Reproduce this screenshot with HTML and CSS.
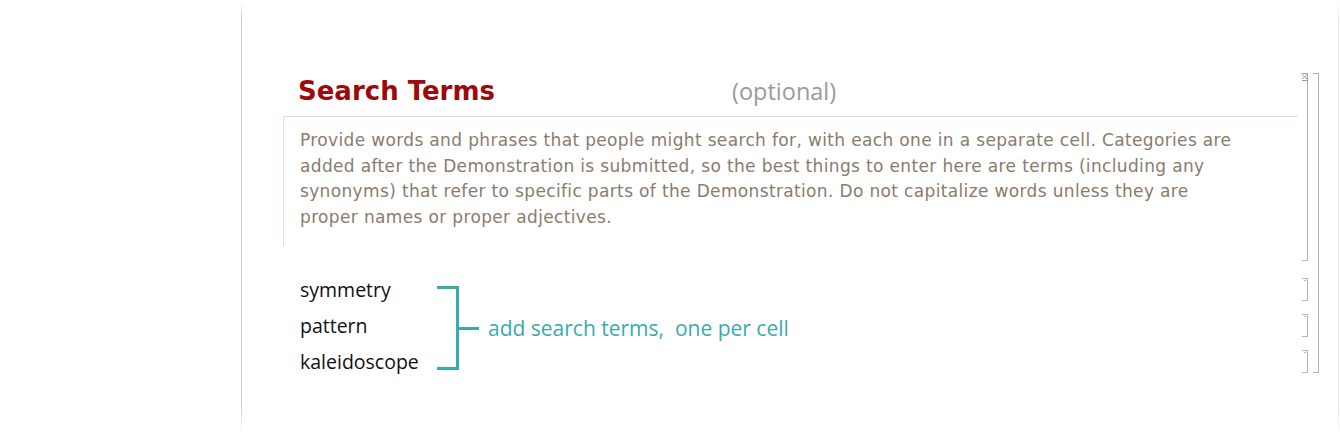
FILE: index.html
```html
<!DOCTYPE html>
<html lang="en">
<head>
<meta charset="utf-8">
<title>Search Terms</title>
<link rel="stylesheet" href="styles.css">
</head>
<body>
<div class="page">
  <div class="gutter"></div>
  <div class="divider-left"></div>
  <div class="notebook">
    <div class="group">
      <div class="cells">
        <div class="cell cell-top">
          <div class="cell-body">
            <div class="heading-row">
              <h2 class="heading">Search Terms</h2>
              <span class="optional">(optional)</span>
            </div>
            <div class="desc">
              Provide words and phrases that people might search for, with each one in a separate cell. Categories are<br>
              added after the Demonstration is submitted, so the best things to enter here are terms (including any<br>
              synonyms) that refer to specific parts of the Demonstration. Do not capitalize words unless they are<br>
              proper names or proper adjectives.
            </div>
          </div>
          <div class="cbracket cbracket-top">
            <svg class="closed-mark" width="7" height="11" viewBox="0 0 7 11"><path d="M0.5 0.5H6.5V10.5M1 1.5L6 6M6 1.5L1 6M1 7.5H6" stroke="#9f9f9f" stroke-width="1" fill="none"/></svg>
          </div>
        </div>
        <div class="cell cell-term">
          <div class="cell-body term">symmetry</div>
          <div class="cbracket"><span class="tick"></span></div>
        </div>
        <div class="cell cell-term">
          <div class="cell-body term">pattern</div>
          <div class="cbracket"><span class="tick"></span></div>
        </div>
        <div class="cell cell-term">
          <div class="cell-body term">kaleidoscope</div>
          <div class="cbracket"><span class="tick"></span></div>
        </div>
        <div class="annotation">
          <div class="ann-bracket"></div>
          <div class="ann-tick"></div>
          <span class="ann-text">add search terms,&nbsp; one per cell</span>
        </div>
      </div>
      <div class="gbracket"></div>
    </div>
  </div>
  <div class="divider-right"></div>
</div>
</body>
</html>
```
FILE: styles.css
```css
html, body {
  margin: 0;
  padding: 0;
  background: #ffffff;
}

.page {
  display: flex;
  width: 1340px;
  height: 434px;
  overflow: hidden;
}

.gutter {
  width: 241px;
  flex: none;
}

.divider-left {
  width: 1px;
  flex: none;
  background: linear-gradient(to bottom, #ffffff 0%, #cfcfcf 4%, #cfcfcf 94%, #ffffff 100%);
}

.divider-right {
  width: 1px;
  flex: none;
  margin-right: 1px;
  background: linear-gradient(to bottom, #ffffff 0%, #e6e6e6 5%, #e6e6e6 95%, #ffffff 100%);
}

.notebook {
  flex: 1;
  padding: 73px 19px 0 41px;
  box-sizing: border-box;
}

.group {
  display: flex;
}

.cells {
  flex: 1;
  display: flex;
  flex-direction: column;
  gap: 13px;
  margin-right: 5px;
  position: relative;
}

.gbracket {
  width: 5px;
  flex: none;
  border: 1px solid #b3b3b3;
  border-left: none;
}

.cell {
  display: flex;
}

.cell-body {
  flex: 1;
}

.cbracket {
  flex: none;
  border: 1px solid #b3b3b3;
  border-left: none;
  box-sizing: border-box;
  width: 6px;
}

.tick {
  display: block;
  width: 2px;
  height: 1px;
  margin: 1px 0 0 2px;
  background: #b3b3b3;
}

.cbracket-top {
  border-top: none;
}

.closed-mark {
  display: block;
  margin-left: -1px;
}

.cell-top {
  height: 188px;
  margin-bottom: 4px;
}

.heading-row {
  display: flex;
  align-items: baseline;
  height: 43px;
  box-sizing: border-box;
  padding-left: 15px;
  padding-top: 2px;
}

.heading {
  margin: 0;
  width: 434px;
  flex: none;
  font-family: "DejaVu Sans", Verdana, sans-serif;
  font-weight: bold;
  font-size: 26px;
  line-height: 32px;
  color: #9c0a0c;
}

.optional {
  font-family: "Open Sans", sans-serif;
  font-size: 23.5px;
  color: #9a9a9a;
}

.desc {
  margin-right: 4px;
  height: 130px;
  box-sizing: border-box;
  border-top: 1px solid #e6dccf;
  border-left: 1px solid #e6dccf;
  padding: 11px 0 0 16px;
  font-family: "DejaVu Sans", Verdana, sans-serif;
  font-size: 17px;
  letter-spacing: 0.35px;
  line-height: 25.7px;
  color: #8b7b6b;
  white-space: nowrap;
}

.cell-term {
  height: 23px;
}

.term {
  padding-left: 17px;
  padding-top: 1px;
  font-family: "Open Sans", sans-serif;
  font-size: 19.5px;
  line-height: 22px;
  color: #111111;
}

.annotation {
  position: absolute;
  left: 154px;
  top: 213px;
  height: 84px;
  display: flex;
  align-items: center;
}

.ann-bracket {
  width: 22px;
  height: 84px;
  box-sizing: border-box;
  border: 3px solid #3aabab;
  border-left: none;
}

.ann-tick {
  width: 20px;
  height: 3px;
  background: #3aabab;
}

.ann-text {
  margin-left: 9px;
  font-family: "Open Sans", sans-serif;
  font-size: 21px;
  color: #3aabab;
  white-space: nowrap;
}
```
